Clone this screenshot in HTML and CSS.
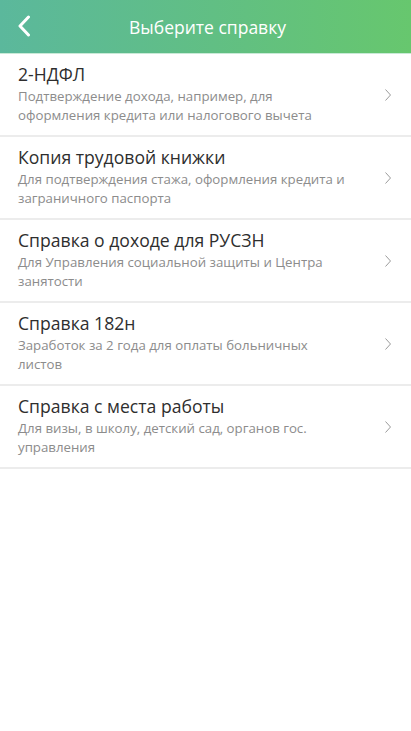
FILE: index.html
```html
<!DOCTYPE html>
<html lang="ru">
<head>
<meta charset="utf-8">
<link rel="stylesheet" href="styles.css">
</head>
<body>
<header class="topbar">
  <button class="back" aria-label="Назад">
    <svg width="14" height="22" viewBox="0 0 14 22"><path d="M11.5 2 L3 11 L11.5 20" fill="none" stroke="#fff" stroke-width="3" stroke-linecap="round" stroke-linejoin="round"/></svg>
  </button>
  <h1 class="title">Выберите справку</h1>
</header>
<ul class="list">
  <li class="item">
    <div class="text">
      <div class="name">2-НДФЛ</div>
      <div class="desc">Подтверждение дохода, например, для оформления кредита или налогового вычета</div>
    </div>
    <svg class="chev" width="6" height="12" viewBox="0 0 6 12"><path d="M0.5 0.5 L5.5 6 L0.5 11.5" fill="none" stroke="#9a9a9a" stroke-width="1"/></svg>
  </li>
  <li class="item">
    <div class="text">
      <div class="name">Копия трудовой книжки</div>
      <div class="desc">Для подтверждения стажа, оформления кредита и заграничного паспорта</div>
    </div>
    <svg class="chev" width="6" height="12" viewBox="0 0 6 12"><path d="M0.5 0.5 L5.5 6 L0.5 11.5" fill="none" stroke="#9a9a9a" stroke-width="1"/></svg>
  </li>
  <li class="item">
    <div class="text">
      <div class="name">Справка о доходе для РУСЗН</div>
      <div class="desc">Для Управления социальной защиты и Центра занятости</div>
    </div>
    <svg class="chev" width="6" height="12" viewBox="0 0 6 12"><path d="M0.5 0.5 L5.5 6 L0.5 11.5" fill="none" stroke="#9a9a9a" stroke-width="1"/></svg>
  </li>
  <li class="item">
    <div class="text">
      <div class="name">Справка 182н</div>
      <div class="desc">Заработок за 2 года для оплаты больничных листов</div>
    </div>
    <svg class="chev" width="6" height="12" viewBox="0 0 6 12"><path d="M0.5 0.5 L5.5 6 L0.5 11.5" fill="none" stroke="#9a9a9a" stroke-width="1"/></svg>
  </li>
  <li class="item">
    <div class="text">
      <div class="name">Справка с места работы</div>
      <div class="desc">Для визы, в школу, детский сад, органов гос. управления</div>
    </div>
    <svg class="chev" width="6" height="12" viewBox="0 0 6 12"><path d="M0.5 0.5 L5.5 6 L0.5 11.5" fill="none" stroke="#9a9a9a" stroke-width="1"/></svg>
  </li>
</ul>
</body>
</html>
```
FILE: styles.css
```css
* { box-sizing: border-box; }
html, body { margin: 0; padding: 0; background: #fff; }
body { font-family: "Open Sans", "Noto Sans", sans-serif; width: 411px; }

.topbar {
  height: 54px;
  display: flex;
  align-items: center;
  justify-content: center;
  position: relative;
  background: linear-gradient(90deg, #5bb89c 0%, #62c080 60%, #67c76e 100%);
  border-bottom: 1px solid #c9ead7;
}
.back {
  position: absolute;
  left: 17px;
  top: 15px;
  padding: 0;
  border: 0;
  background: none;
  display: flex;
}
.title {
  margin: 0 0 0 4px;
  font-size: 17.5px;
  font-weight: 400;
  color: #fff;
}

.list { list-style: none; margin: 0; padding: 0; }
.item {
  height: 83px;
  display: flex;
  align-items: center;
  padding: 0 20px 0 18px;
  border-bottom: 2px solid #ececec;
}
.text { flex: 1; padding-bottom: 1px; }
.name {
  font-size: 17.6px;
  line-height: 22px;
  color: #2e2e2e;
}
.desc {
  margin-top: 2px;
  font-size: 13.25px;
  line-height: 19px;
  color: #8c8c8c;
  padding-right: 40px;
}
.chev { flex: none; }
```
